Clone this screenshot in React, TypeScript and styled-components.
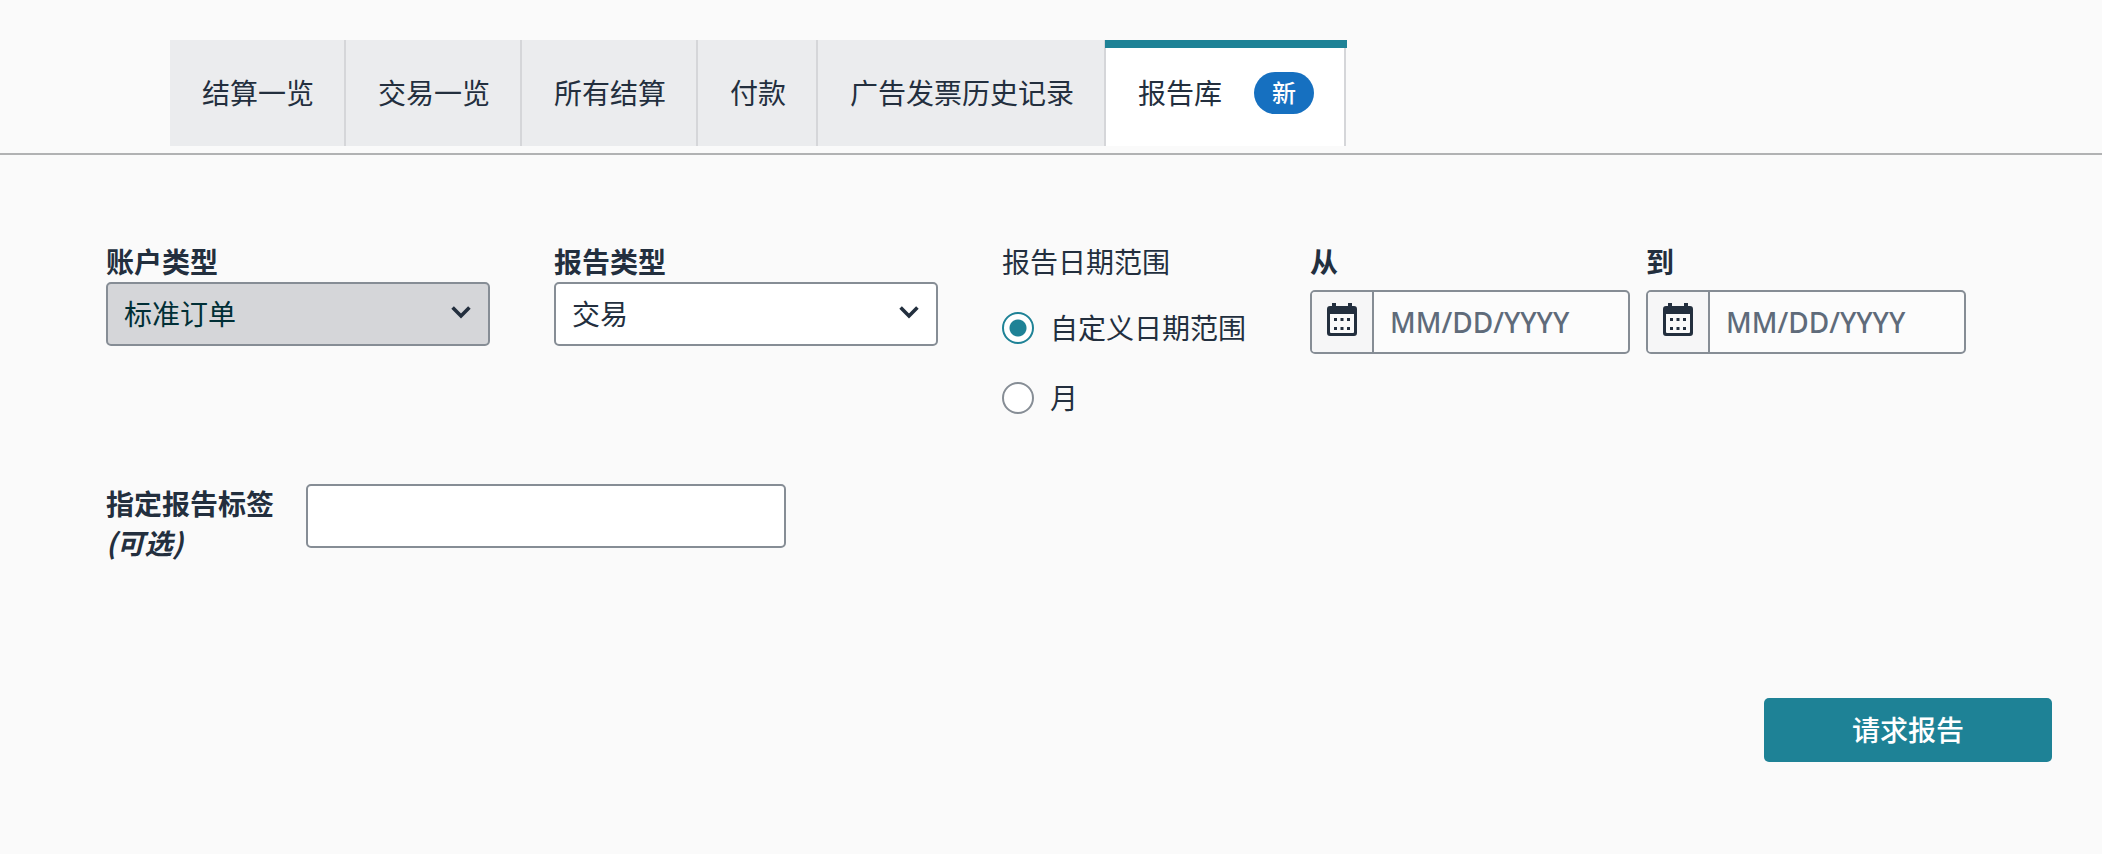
import React, { useState } from "react";
import styled, { createGlobalStyle } from "styled-components";

const color = {
  page: "#fafafa",
  text: "#232f3e",
  teal: "#1e8296",
  border: "#868d95",
  divider: "#d5d6d9",
  tab: "#ebecee",
};

const GlobalStyle = createGlobalStyle`
  *, *::before, *::after { box-sizing: border-box; }
  body {
    margin: 0;
    background: ${color.page};
    color: ${color.text};
    font-family: "Noto Sans", "Noto Sans CJK SC", sans-serif;
    font-size: 28px;
    line-height: 40px;
  }
  input, select, button { font: inherit; color: inherit; }
`;

const TabBar = styled.nav`
  display: flex;
  padding: 40px 50px 5px 170px;
  border-bottom: 2px solid #b1b2b3;
`;

const Tab = styled.a<{ $active?: boolean }>`
  position: relative;
  display: flex;
  align-items: center;
  gap: 32px;
  height: 106px;
  margin-bottom: 2px;
  padding: 0 30px 0 32px;
  border-right: 2px solid ${color.divider};
  background: ${(p) => (p.$active ? "#fff" : color.tab)};
  color: inherit;
  text-decoration: none;
  white-space: nowrap;

  &::before {
    content: "";
    display: ${(p) => (p.$active ? "block" : "none")};
    position: absolute;
    top: 0;
    left: -1px;
    right: -3px;
    height: 8px;
    background: ${color.teal};
  }
`;

const Badge = styled.span`
  padding: 0 18px;
  border-radius: 21px;
  background: #1670c0;
  color: #fff;
  font-size: 24px;
  font-weight: 500;
  line-height: 42px;
`;

const Form = styled.form`
  display: flex;
  flex-direction: column;
  padding: 87px 50px 92px 106px;
`;

const FilterRow = styled.div`
  display: flex;
  align-items: flex-start;
  gap: 64px;
`;

const Field = styled.div`
  display: flex;
  flex-direction: column;
  flex: 0 1 384px;
`;

const Label = styled.label`
  font-weight: 700;
`;

const SelectBox = styled.div`
  position: relative;

  svg {
    position: absolute;
    top: 24px;
    right: 19px;
    pointer-events: none;
  }
`;

const Select = styled.select`
  display: block;
  width: 100%;
  height: 64px;
  padding: 0 56px 0 16px;
  border: 2px solid ${color.border};
  border-radius: 5px;
  background: #fff;
  appearance: none;

  &:disabled {
    background: #d5d6d9;
    color: #002f36;
    opacity: 1;
  }
`;

const RangeGroup = styled.fieldset`
  flex: none;
  margin: 0;
  padding: 0;
  border: 0;
`;

const Legend = styled.legend`
  padding: 0;
`;

const RadioList = styled.div`
  display: flex;
  flex-direction: column;
  gap: 30px;
  padding-top: 26px;
`;

const RadioLabel = styled.label`
  display: flex;
  align-items: center;
  gap: 16px;
`;

const Radio = styled.input`
  appearance: none;
  width: 32px;
  height: 32px;
  margin: 0;
  border: 2px solid ${color.border};
  border-radius: 50%;
  background: #fff;

  &:checked {
    border-color: ${color.teal};
    background: radial-gradient(circle, ${color.teal} 8px, #fff 9px);
  }
`;

const DateGroup = styled.div`
  display: flex;
  gap: 16px;
`;

const DateField = styled.div`
  display: flex;
  flex-direction: column;
  gap: 8px;
  flex: 0 1 320px;
`;

const DateBox = styled.div`
  display: flex;
  height: 64px;
  border: 2px solid ${color.border};
  border-radius: 5px;
  background: #fcfcfc;
  overflow: hidden;
`;

const CalendarButton = styled.button`
  display: flex;
  flex: none;
  justify-content: center;
  align-items: flex-start;
  width: 62px;
  padding: 11px 0 0;
  border: 0;
  border-right: 2px solid ${color.border};
  background: #f6f6f7;
`;

const DateInput = styled.input`
  width: 254px;
  min-width: 0;
  padding: 0 16px;
  border: 0;
  background: transparent;
  font-weight: 500;

  &::placeholder {
    color: #5f6b7a;
    opacity: 1;
  }
`;

const TagRow = styled.div`
  display: flex;
  align-items: flex-start;
  gap: 32px;
  margin-top: 66px;
`;

const Optional = styled.em`
  display: block;
  font-family: "Noto Sans CJK SC", sans-serif;
  line-height: 36px;
`;

const TagInput = styled.input`
  flex: 0 1 480px;
  height: 64px;
  padding: 0 16px;
  border: 2px solid ${color.border};
  border-radius: 5px;
  background: #fff;
`;

const Actions = styled.div`
  display: flex;
  justify-content: flex-end;
  margin-top: 138px;
`;

const SubmitButton = styled.button`
  width: 288px;
  height: 64px;
  padding: 0;
  border: 0;
  border-radius: 5px;
  background: ${color.teal};
  color: #fff;
  font-weight: 500;
`;

const Chevron = () => (
  <svg width="20" height="13" viewBox="0 0 20 13" fill="none" aria-hidden="true">
    <path d="M1.6 1.6 10 10 18.4 1.6" stroke={color.text} strokeWidth="3.6" />
  </svg>
);

const CalendarIcon = () => (
  <svg width="30" height="33" viewBox="0 0 30 33" fill={color.text} aria-hidden="true">
    <path d="M5 0h4v3h12V0h4v3h2a3 3 0 0 1 3 3v24a3 3 0 0 1-3 3H3a3 3 0 0 1-3-3V6a3 3 0 0 1 3-3h2z" />
    <path d="M3 11h24v18a1 1 0 0 1-1 1H4a1 1 0 0 1-1-1z" fill="#fafafa" />
    <path d="M7 15h3v3H7zM13.5 15h3v3h-3zM20 15h3v3h-3zM7 24h3v3H7zM13.5 24h3v3h-3zM20 24h3v3h-3z" />
  </svg>
);

const tabs = ["结算一览", "交易一览", "所有结算", "付款", "广告发票历史记录"];
const dates = [
  { id: "from", label: "从" },
  { id: "to", label: "到" },
];

export default function App() {
  const [range, setRange] = useState("custom");

  return (
    <>
      <GlobalStyle />
      <TabBar>
        {tabs.map((name) => (
          <Tab key={name} href="#">
            {name}
          </Tab>
        ))}
        <Tab href="#" $active aria-current="page">
          报告库
          <Badge>新</Badge>
        </Tab>
      </TabBar>
      <Form onSubmit={(e) => e.preventDefault()}>
        <FilterRow>
          <Field>
            <Label htmlFor="account">账户类型</Label>
            <SelectBox>
              <Select id="account" disabled>
                <option>标准订单</option>
              </Select>
              <Chevron />
            </SelectBox>
          </Field>
          <Field>
            <Label htmlFor="report">报告类型</Label>
            <SelectBox>
              <Select id="report">
                <option>交易</option>
              </Select>
              <Chevron />
            </SelectBox>
          </Field>
          <RangeGroup>
            <Legend>报告日期范围</Legend>
            <RadioList>
              <RadioLabel>
                <Radio
                  type="radio"
                  name="range"
                  checked={range === "custom"}
                  onChange={() => setRange("custom")}
                />
                自定义日期范围
              </RadioLabel>
              <RadioLabel>
                <Radio
                  type="radio"
                  name="range"
                  checked={range === "month"}
                  onChange={() => setRange("month")}
                />
                月
              </RadioLabel>
            </RadioList>
          </RangeGroup>
          <DateGroup>
            {dates.map((d) => (
              <DateField key={d.id}>
                <Label htmlFor={d.id}>{d.label}</Label>
                <DateBox>
                  <CalendarButton type="button" aria-label={d.label}>
                    <CalendarIcon />
                  </CalendarButton>
                  <DateInput id={d.id} type="text" placeholder="MM/DD/YYYY" />
                </DateBox>
              </DateField>
            ))}
          </DateGroup>
        </FilterRow>
        <TagRow>
          <Label htmlFor="tag">
            指定报告标签
            <Optional>(可选)</Optional>
          </Label>
          <TagInput id="tag" type="text" />
        </TagRow>
        <Actions>
          <SubmitButton type="submit">请求报告</SubmitButton>
        </Actions>
      </Form>
    </>
  );
}
